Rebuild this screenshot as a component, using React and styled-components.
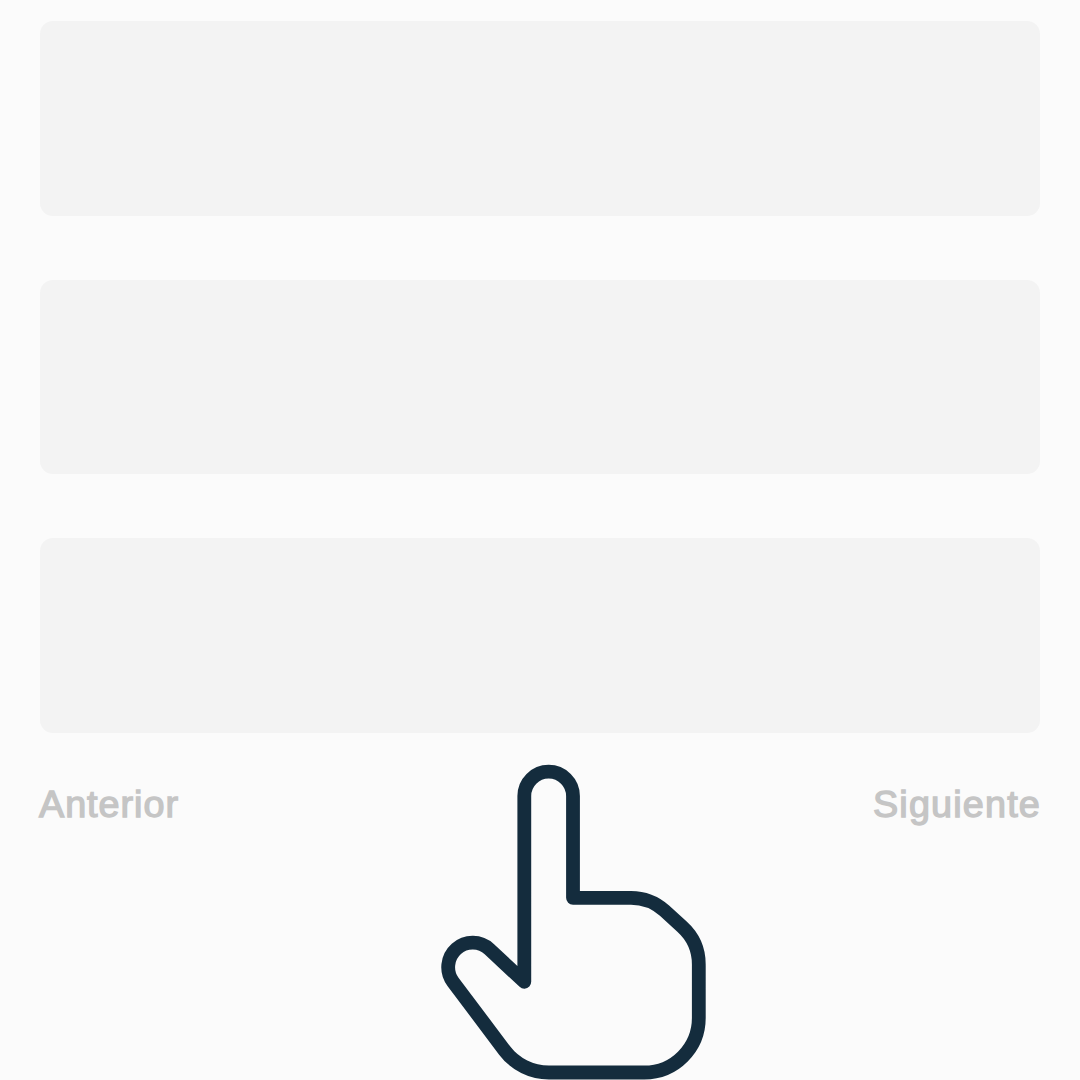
import React from "react";
import styled, { createGlobalStyle } from "styled-components";

const GlobalStyle = createGlobalStyle`
  body { margin: 0; background: #fbfbfb; }
`;

const Page = styled.main`
  position: relative;
  box-sizing: border-box;
  width: 1080px;
  height: 1080px;
  padding: 21px 40px 0;
  overflow: hidden;
  background: #fbfbfb;
  font-family: "Liberation Sans", Arial, sans-serif;
`;

const CardList = styled.div`
  display: grid;
  gap: 64px;
`;

const Card = styled.div`
  height: 194.6px;
  border-radius: 13px;
  background: #f3f3f3;
`;

const Pager = styled.nav`
  display: flex;
  justify-content: space-between;
  margin: 51px -1px 0;
`;

const PagerButton = styled.button`
  padding: 0;
  border: 0;
  background: none;
  color: #c5c5c5;
  font: 400 36px/42px "Liberation Sans", Arial, sans-serif;
  letter-spacing: ${(p) => p.$spacing};
  -webkit-text-stroke: 1.3px #c5c5c5;
  transform: scaleX(1.05);
  transform-origin: ${(p) => p.$side} center;
`;

const Pointer = styled.svg`
  position: absolute;
  left: 432px;
  top: 756px;
  width: 284px;
  height: 324px;
  fill: #fbfbfb;
  stroke: #142c3d;
  stroke-width: 13.8;
  stroke-linecap: round;
  stroke-linejoin: round;
`;

export default function App() {
  return (
    <>
      <GlobalStyle />
      <Page>
        <CardList>
          <Card />
          <Card />
          <Card />
        </CardList>
        <Pager>
          <PagerButton $side="left" $spacing="0.9px">Anterior</PagerButton>
          <PagerButton $side="right" $spacing="1.1px">Siguiente</PagerButton>
        </Pager>
        <Pointer viewBox="432 756 284 324" aria-hidden="true">
          <path d="M524.3 981.8V796A24.35 24.35 0 0 1 573 796V897.8H631A50.3 50.3 0 0 1 664.5 910.6L682 926.7A51 51 0 0 1 698.8 965V1018A54.5 54.5 0 0 1 644.3 1072.5H549A55.6 55.6 0 0 1 504.6 1050.5L453 981.8A24.5 24.5 0 0 1 489.4 949.3Z" />
        </Pointer>
      </Page>
    </>
  );
}
